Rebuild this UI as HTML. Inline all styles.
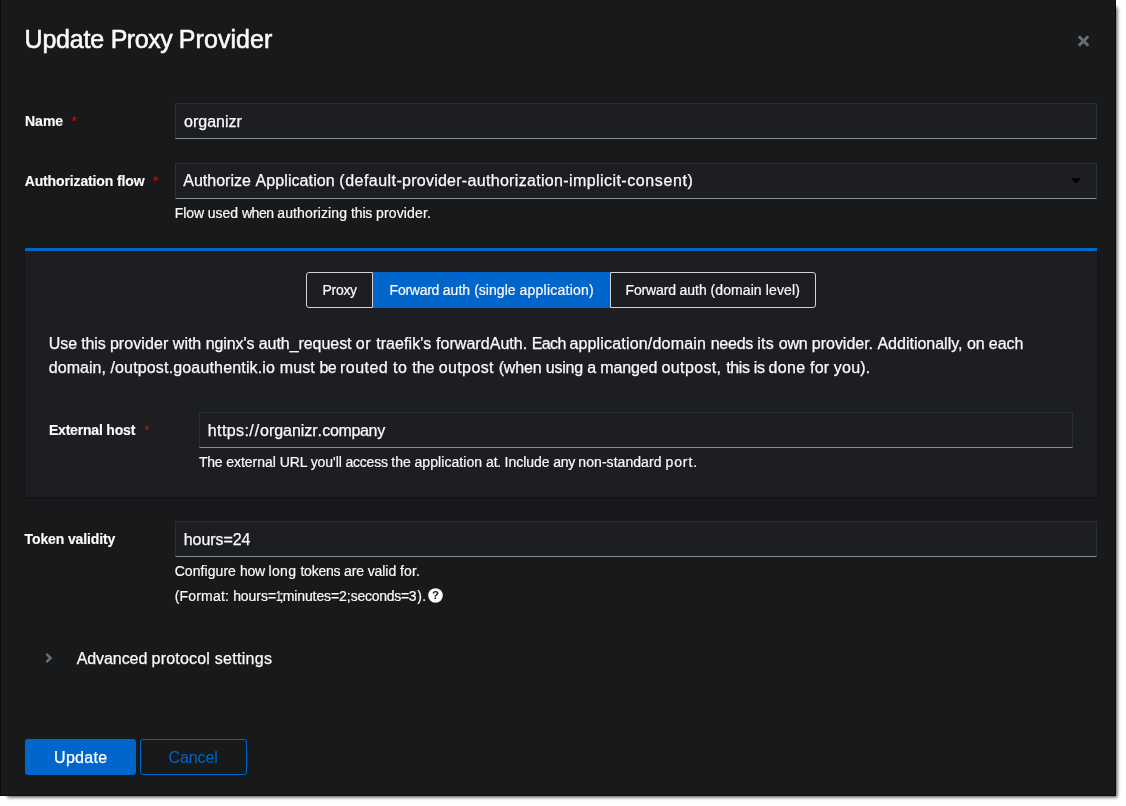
<!DOCTYPE html>
<html lang="en">
<head>
<meta charset="utf-8">
<title>Update Proxy Provider</title>
<style>
*{box-sizing:border-box;margin:0;padding:0}
html,body{width:1126px;height:806px;overflow:hidden;background:#fff}
body{font-family:"Liberation Sans",sans-serif;color:#fafafa;position:relative}
.modal{position:absolute;left:0;top:0;width:1116px;height:796px;background:#18191a;border-right:1px solid #0a0b0c;border-bottom:1px solid #0a0b0c;box-shadow:4px 4px 3.5px -2.5px rgba(0,0,0,.7)}
.edge{position:absolute;left:0;top:0;width:1px;height:795px;background:#0c0c0e}
.t{position:absolute;white-space:nowrap;line-height:1;will-change:opacity}
.title{left:24.6px;top:27px;font-size:25px;color:#fafafa;letter-spacing:-.22px;-webkit-text-stroke:.55px #fafafa}
.lbl{font-weight:bold;font-size:14px;-webkit-text-stroke:.15px #fafafa}
.req{position:absolute;color:#b8170a;font-size:14.5px;line-height:1}
.inp{position:absolute;height:36px;background:#1c1e21;border:1px solid #2b2e33;border-bottom-color:#8a8d90}
.v{font-size:16px;-webkit-text-stroke:.25px #fafafa}
.h{font-size:14px;-webkit-text-stroke:.2px #fafafa}
.card{position:absolute;left:25px;top:248px;width:1072px;height:249px;background:#1c1e21;border-top:3px solid #06c;box-shadow:0 1px 2px rgba(3,3,3,.2),0 0 2px rgba(3,3,3,.12)}
.tg{position:absolute;top:272px;height:36px;font-size:14px;line-height:1;border:1px solid #d2d2d2;white-space:nowrap}
.tg span{position:absolute;top:10px;will-change:opacity;-webkit-text-stroke:.2px #fafafa}
.btn{position:absolute;top:739px;height:36px;border-radius:3px;font-size:16px;line-height:1;white-space:nowrap}
.btn span{position:absolute;top:11px;will-change:opacity}
</style>
</head>
<body>
<div class="modal">
<div class="edge"></div>
<div class="t title" id="title" style="white-space:pre"><span>Update </span><span style="letter-spacing:-.44px">Proxy </span><span style="letter-spacing:.06px">Provider</span></div>
<svg style="position:absolute;left:1076px;top:33px" width="16" height="16" viewBox="0 0 16 16"><g fill="#6a6e73" transform="translate(7.55 8)"><rect x="-6.75" y="-1.5" width="13.5" height="3" rx=".7" transform="rotate(45)"/><rect x="-6.75" y="-1.5" width="13.5" height="3" rx=".7" transform="rotate(-45)"/></g></svg>

<div class="t lbl" id="l1" style="left:25px;top:114px">Name</div>
<div class="req" style="left:71px;top:113.6px">*</div>
<div class="inp" style="left:175px;top:103px;width:922px"></div>
<div class="t v" id="v1" style="left:184px;top:114px">organizr</div>

<div class="t lbl" id="l2" style="left:24.7px;top:174px;letter-spacing:-.13px">Authorization flow</div>
<div class="req" style="left:152.6px;top:173.6px">*</div>
<div class="inp" style="left:175px;top:163px;width:922px"></div>
<div class="t v" id="v2" style="left:183.2px;top:173px;white-space:pre"><span style="letter-spacing:0.025px">Authorize </span><span style="letter-spacing:0.093px">Application </span><span style="letter-spacing:0.475px">(default</span><span style="letter-spacing:0.24px">-provider</span><span style="letter-spacing:0.325px">-authorization</span><span style="letter-spacing:0.42px">-implicit</span><span style="letter-spacing:0.6px">-consent)</span></div>
<svg style="position:absolute;left:1071px;top:178.4px" width="10" height="5.6" viewBox="0 0 10 6" preserveAspectRatio="none"><path d="M0.6 0.3 H9.4 Q10 0.5 9.6 1 L5.4 5.6 Q5 6 4.6 5.6 L0.4 1 Q0 .5 .6 .3Z" fill="#000"/></svg>
<div class="t h" id="h2" style="left:174.8px;top:206px;white-space:pre"><span style="letter-spacing:-0.083px">Flow </span><span style="letter-spacing:-0.044px">used </span><span style="letter-spacing:-0.395px">when </span><span style="letter-spacing:0.116px">authorizing </span><span style="letter-spacing:-0.156px">this </span><span style="letter-spacing:0.16px">provider.</span></div>

<div class="card"></div>
<div class="tg" style="left:306px;width:67px;border-radius:3px 0 0 3px"><span id="t1" style="left:15.5px;letter-spacing:-.3px">Proxy</span></div>
<div class="tg" style="left:373px;width:237px;background:#06c;border-color:#06c"><span id="t2" style="left:15.6px;white-space:pre"><span style="position:static;letter-spacing:-.26px">Forward </span><span style="position:static;letter-spacing:.05px">auth </span><span style="position:static;letter-spacing:.03px">(single </span><span style="position:static;letter-spacing:.24px">application)</span></span></div>
<div class="tg" style="left:610px;width:206px;border-radius:0 3px 3px 0"><span id="t3" style="left:14.6px;white-space:pre"><span style="position:static;letter-spacing:-.17px">Forward </span><span style="position:static">auth </span><span style="position:static;letter-spacing:.07px">(domain </span><span style="position:static;letter-spacing:.17px">level)</span></span></div>

<div class="t v" id="p1" style="left:48.8px;top:336px;white-space:pre"><span style="letter-spacing:-0.104px">Use </span><span style="letter-spacing:-0.147px">this </span><span style="letter-spacing:0.078px">provider </span><span style="letter-spacing:-0.018px">with </span><span style="letter-spacing:-0.083px">nginx&#x27;s </span><span style="letter-spacing:-0.058px">auth_request </span><span style="letter-spacing:0.553px">or </span><span style="letter-spacing:0.064px">traefik&#x27;s </span><span style="letter-spacing:0.058px">forwardAuth. </span><span style="letter-spacing:-0.678px">Each </span><span style="letter-spacing:0.181px">application/domain </span><span style="letter-spacing:-0.242px">needs </span><span style="letter-spacing:0.236px">its </span><span style="letter-spacing:-0.164px">own </span><span style="letter-spacing:-0.021px">provider. </span><span style="letter-spacing:-0.005px">Additionally, </span><span style="letter-spacing:-0.119px">on </span><span style="letter-spacing:-0.061px">each</span></div>
<div class="t v" id="p2" style="left:48.83px;top:360px;white-space:pre"><span style="letter-spacing:0.025px">domain, </span><span style="letter-spacing:0.162px">/outpost.goauthentik.io </span><span style="letter-spacing:0.101px">must </span><span style="letter-spacing:-0.527px">be </span><span style="letter-spacing:0.458px">routed </span><span style="letter-spacing:0.468px">to </span><span style="letter-spacing:-0.054px">the </span><span style="letter-spacing:0.368px">outpost </span><span style="letter-spacing:-0.146px">(when </span><span style="letter-spacing:-0.209px">using a </span><span style="letter-spacing:-0.125px">manged </span><span style="letter-spacing:0.362px">outpost, </span><span style="letter-spacing:-0.374px">this </span><span style="letter-spacing:-0.367px">is </span><span style="letter-spacing:0.28px">done </span><span style="letter-spacing:0.166px">for </span><span style="letter-spacing:0.205px">you).</span></div>

<div class="t lbl" id="l3" style="left:48.9px;top:423px;letter-spacing:-.19px">External host</div>
<div class="req" style="left:143.7px;top:422.6px">*</div>
<div class="inp" style="left:199px;top:412px;width:874px"></div>
<div class="t v" id="v3" style="left:207.8px;top:423px;white-space:pre"><span style="letter-spacing:.39px">https:</span><span style="letter-spacing:.94px">//</span><span style="letter-spacing:-.05px">organizr</span><span style="letter-spacing:.34px">.</span><span style="letter-spacing:-.34px">company</span></div>
<div class="t h" id="h3" style="left:198.89px;top:455px;white-space:pre"><span style="letter-spacing:-0.174px">The </span><span style="letter-spacing:-0.021px">external </span><span style="letter-spacing:-0.111px">URL </span><span style="letter-spacing:-0.06px">you&#x27;ll </span><span style="letter-spacing:-0.255px">access </span><span style="letter-spacing:-0.036px">the </span><span style="letter-spacing:0.064px">application </span><span style="letter-spacing:-0.242px">at. </span><span style="letter-spacing:-0.044px">Include </span><span style="letter-spacing:-0.351px">any </span><span style="letter-spacing:0.055px">non-standard </span><span style="letter-spacing:0.891px">port.</span></div>

<div class="t lbl" id="l4" style="left:24.6px;top:532px;letter-spacing:-.13px">Token validity</div>
<div class="inp" style="left:175px;top:521px;width:922px"></div>
<div class="t v" id="v4" style="left:183.8px;top:532px;letter-spacing:-.08px">hours=24</div>
<div class="t h" id="h4" style="left:174.69px;top:564px;white-space:pre"><span style="letter-spacing:0.065px">Configure </span><span style="letter-spacing:-0.238px">how </span><span style="letter-spacing:0.294px">long </span><span style="letter-spacing:-0.218px">tokens </span><span style="letter-spacing:-0.12px">are </span><span style="letter-spacing:-0.073px">valid </span><span style="letter-spacing:0.203px">for.</span></div>
<div class="t h" id="h5" style="left:174.73px;top:589px;white-space:pre"><span style="letter-spacing:0.18px">(Format: </span><span style="letter-spacing:-0.043px">hours=</span><span style="display:inline-block;width:3.4px;transform:scaleX(.7);transform-origin:0 0">1</span><span style="letter-spacing:-0.64px">;</span><span style="letter-spacing:-0.11px">minutes=</span><span style="letter-spacing:-0.037px">2;</span><span style="letter-spacing:-0.271px">seconds=</span><span style="letter-spacing:0.534px">3).</span></div>
<svg style="position:absolute;left:428px;top:588px;will-change:opacity" width="15" height="15" viewBox="0 0 15 15"><circle cx="7.5" cy="7.5" r="7.3" fill="#fafafa"/><text x="7.6" y="11.1" text-anchor="middle" font-family="Liberation Sans, sans-serif" font-weight="bold" font-size="11.5" fill="#18191a">?</text></svg>

<svg style="position:absolute;left:44px;top:652px" width="10" height="13" viewBox="0 0 10 13"><path d="M2.4 1.8 L6.6 6 L2.4 10.2" stroke="#6a6e73" stroke-width="2.5" fill="none" stroke-linecap="butt" stroke-linejoin="miter"/></svg>
<div class="t v" id="adv" style="left:76.7px;top:651px;white-space:pre"><span style="letter-spacing:-.08px">Advanced </span><span style="letter-spacing:.19px">protocol </span><span style="letter-spacing:.31px">settings</span></div>

<div class="btn" style="left:25px;width:111px;background:#06c;color:#fff"><span id="b1" style="left:29px;-webkit-text-stroke:.25px #fff;letter-spacing:.33px">Update</span></div>
<div class="btn" style="left:140px;width:107px;border:1px solid #06c;color:#06c"><span id="b2" style="left:27.5px;top:10px;letter-spacing:-.08px">Cancel</span></div>
</div>
</body>
</html>
